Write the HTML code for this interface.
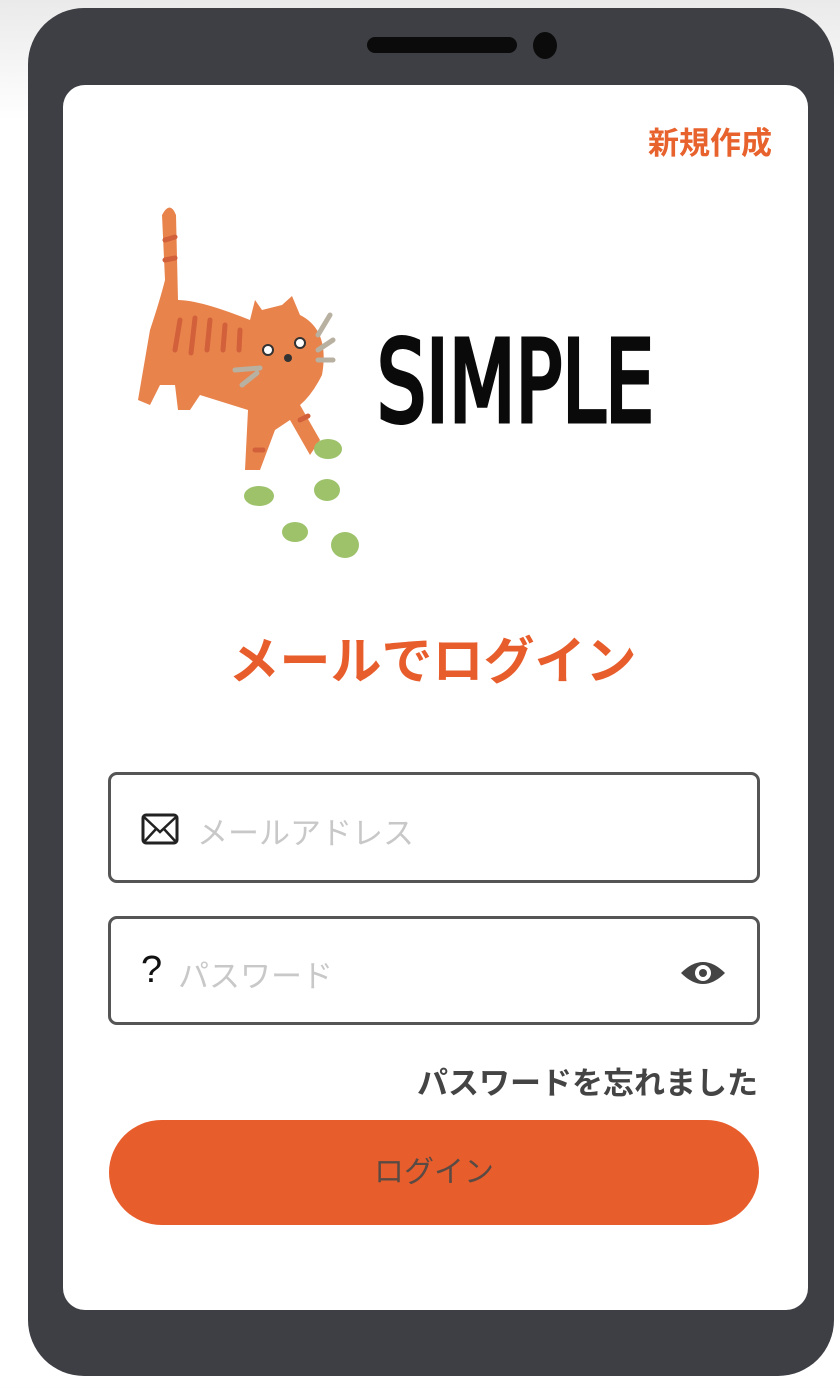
<!DOCTYPE html>
<html><head><meta charset="utf-8"><style>
*{margin:0;padding:0;box-sizing:border-box}
body{width:840px;height:1388px;background:linear-gradient(180deg,#eaeaea 0,#fff 120px);position:relative;overflow:hidden;font-family:"Liberation Sans","Noto Sans CJK JP",sans-serif}
.phone{position:absolute;left:28px;top:8px;width:806px;height:1368px;background:#3d3f44;border-radius:56px}
.screen{position:absolute;left:63px;top:85px;width:745px;height:1225px;background:#fff;border-radius:22px}
.abs{position:absolute}
.spk{left:367px;top:37px;width:150px;height:16px;background:#0b0b0b;border-radius:8px}
.cam{left:533px;top:32px;width:24px;height:27px;background:#0b0b0b;border-radius:50%}
.new{left:640px;top:118px;width:140px;text-align:center;font-size:31px;font-weight:bold;color:#e8622d}
.simple{left:377px;top:318px;font-family:"DejaVu Sans","Liberation Sans",sans-serif;font-size:112px;font-weight:normal;-webkit-text-stroke:5px #0a0a0a;color:#0a0a0a;transform:scaleX(0.69);transform-origin:0 0;white-space:nowrap}
.title{left:0;width:865px;top:620px;text-align:center;font-size:51px;font-weight:bold;color:#e85d2c}
.inp{left:108px;width:652px;border:3px solid #555;border-radius:9px;background:#fff}
.ph{font-size:31px;color:#c8c8c8}
.forgot{left:380px;width:378px;top:1058px;text-align:right;font-size:31px;font-weight:bold;color:#444}
.btn{left:109px;top:1120px;width:650px;height:105px;background:#e85d2c;border-radius:53px;text-align:center;line-height:105px;font-size:30px;color:#5a4a44}
</style></head><body>
<div class="phone"></div>
<div class="abs spk"></div><div class="abs cam"></div>
<div class="screen"></div>
<div class="abs new">新規作成</div>
<svg class="abs" style="left:120px;top:195px" width="260" height="380" viewBox="120 195 260 380">
 <g fill="#e8834c">
  <path d="M162 215 Q170 200 176 215 L178 300 Q200 300 250 320 L255 300 L262 310 L282 305 L292 296 L300 315 Q330 330 322 375 Q312 395 300 405 L320 440 L310 455 L290 420 L275 430 L260 470 L245 470 L248 410 L200 395 L190 410 L178 410 L175 385 L160 385 L150 405 L138 400 L150 330 Q160 300 165 280 Z"/>
 </g>
 <g stroke="#d2603a" stroke-width="5" stroke-linecap="round" fill="none">
  <path d="M165 240l10 -3M165 260l10-2M180 320l-5 30M195 318l-4 35M210 320l-3 30M225 325l-2 25M240 330l-1 20M300 420l8 -4M255 450l8 0"/>
 </g>
 <circle cx="268" cy="350" r="5" fill="#fff" stroke="#333" stroke-width="2"/>
 <circle cx="300" cy="343" r="5" fill="#fff" stroke="#333" stroke-width="2"/>
 <circle cx="288" cy="358" r="4" fill="#333"/>
 <g stroke="#b8b0a0" stroke-width="5" stroke-linecap="round">
  <path d="M235 370l25-2M242 385l15-12M318 335l12-20M318 350l15-10M318 360l15 0"/>
 </g>
 <g fill="#9dc26a">
  <ellipse cx="328" cy="449" rx="14" ry="10"/>
  <ellipse cx="259" cy="496" rx="15" ry="10"/>
  <ellipse cx="327" cy="490" rx="13" ry="11"/>
  <ellipse cx="295" cy="532" rx="13" ry="10"/>
  <ellipse cx="345" cy="545" rx="14" ry="13"/>
 </g>
</svg>
<div class="abs simple">SIMPLE</div>
<div class="abs title">メールでログイン</div>
<div class="abs inp" style="top:772px;height:111px">
 <svg class="abs" style="left:30px;top:38px" width="38" height="32" viewBox="0 0 38 32"><rect x="2" y="2" width="34" height="28" rx="3" fill="none" stroke="#222" stroke-width="3"/><path d="M3 4L19 19L35 4M3 29L15 16M35 29L23 16" fill="none" stroke="#222" stroke-width="2.5"/></svg>
 <div class="abs ph" style="left:86px;top:33px">メールアドレス</div>
</div>
<div class="abs inp" style="top:916px;height:109px">
 <div class="abs" style="left:30px;top:30px;font-size:38px;color:#111">?</div>
 <div class="abs ph" style="left:67px;top:32px">パスワード</div>
 <svg class="abs" style="left:568px;top:38px" width="48" height="32" viewBox="0 0 48 32"><path d="M2 16Q24 -6 46 16Q24 38 2 16Z" fill="#444"/><circle cx="24" cy="16" r="8" fill="#fff"/><circle cx="24" cy="16" r="4" fill="#444"/></svg>
</div>
<div class="abs forgot">パスワードを忘れました</div>
<div class="abs btn">ログイン</div>
</body></html>
